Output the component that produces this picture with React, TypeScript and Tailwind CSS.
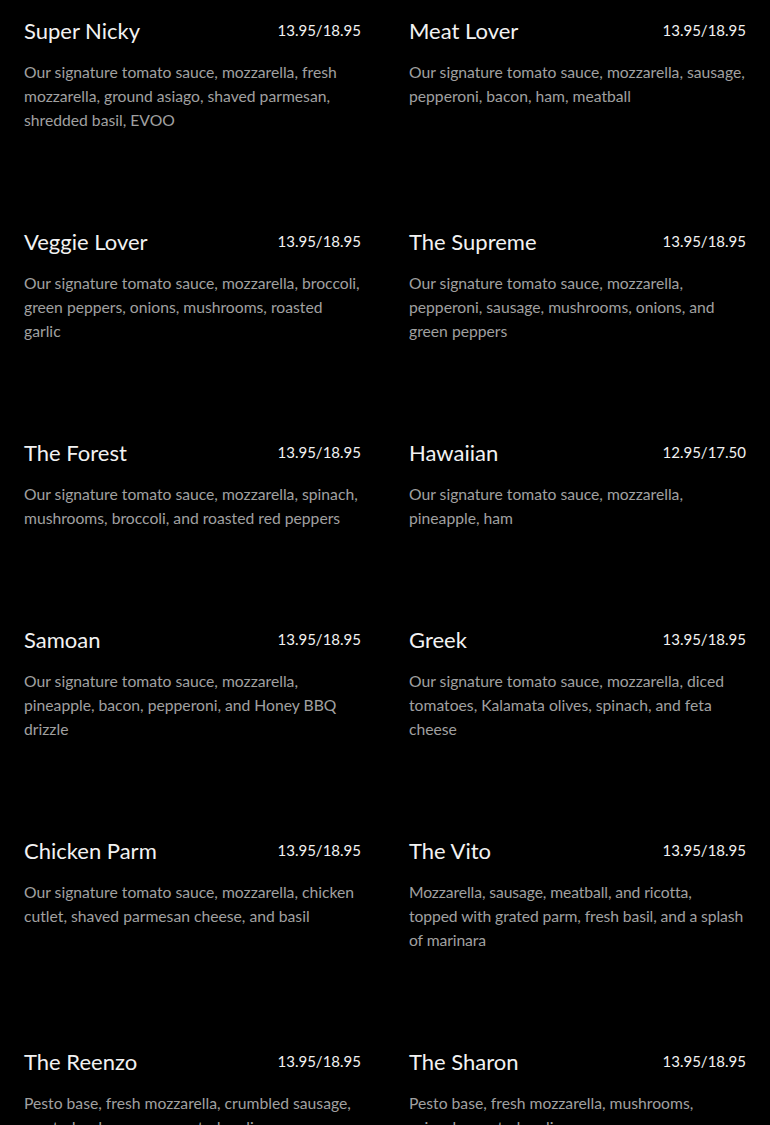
const items = [
  {
    name: "Super Nicky",
    price: "13.95/18.95",
    desc: ["Our signature tomato sauce, mozzarella, fresh mozzarella, ground asiago, shaved parmesan, shredded basil, EVOO"],
  },
  {
    name: "Meat Lover",
    price: "13.95/18.95",
    desc: ["Our signature tomato sauce, mozzarella, sausage, pepperoni, bacon, ham, meatball"],
  },
  {
    name: "Veggie Lover",
    price: "13.95/18.95",
    desc: ["Our signature tomato sauce, mozzarella, broccoli, green peppers, onions, mushrooms, roasted garlic"],
  },
  {
    name: "The Supreme",
    price: "13.95/18.95",
    desc: ["Our signature tomato sauce, mozzarella, pepperoni, sausage, mushrooms, onions, and green peppers"],
  },
  {
    name: "The Forest",
    price: "13.95/18.95",
    desc: ["Our signature tomato sauce, mozzarella, spinach, mushrooms, broccoli, and roasted red peppers"],
  },
  {
    name: "Hawaiian",
    price: "12.95/17.50",
    desc: ["Our signature tomato sauce, mozzarella, pineapple, ham"],
  },
  {
    name: "Samoan",
    price: "13.95/18.95",
    desc: ["Our signature tomato sauce, mozzarella, pineapple, bacon, pepperoni, and Honey BBQ drizzle"],
  },
  {
    name: "Greek",
    price: "13.95/18.95",
    desc: ["Our signature tomato sauce, mozzarella, diced tomatoes, Kalamata olives, spinach, and feta cheese"],
  },
  {
    name: "Chicken Parm",
    price: "13.95/18.95",
    desc: ["Our signature tomato sauce, mozzarella, chicken cutlet, shaved parmesan cheese, and basil"],
  },
  {
    name: "The Vito",
    price: "13.95/18.95",
    // keep the break where the menu has it
    desc: ["Mozzarella, sausage, meatball, and ricotta,", "topped with grated parm, fresh basil, and a splash of marinara"],
    tight: true,
  },
  {
    name: "The Reenzo",
    price: "13.95/18.95",
    desc: ["Pesto base, fresh mozzarella, crumbled sausage, roasted red peppers, roasted garlic"],
  },
  {
    name: "The Sharon",
    price: "13.95/18.95",
    desc: ["Pesto base, fresh mozzarella, mushrooms, spinach, roasted garlic"],
  },
];

type Item = { name: string; price: string; desc: string[]; tight?: boolean };

const MenuItem = ({ name, price, desc, tight }: Item) => {
  return (
    <div>
      <div className="flex items-start justify-between">
        <h3 className="text-[22px] leading-[26px] text-[#f2f2f2]">{name}</h3>
        <span className="pt-[1px] text-[15px] leading-[22px] text-[#f2f2f2]">{price}</span>
      </div>
      <p
        className={
          tight
            ? "mt-4 text-[15.7px] leading-6 tracking-[-0.1px] text-[#a0a0a0]"
            : "mt-4 text-[15.7px] leading-6 text-[#a0a0a0]"
        }
      >
        {desc.map((line, i) => (
          <span key={i}>
            {i > 0 && <br />}
            {line}
          </span>
        ))}
      </p>
    </div>
  );
};

export default function App() {
  return (
    <div className="min-h-screen bg-black font-['Lato',sans-serif] antialiased">
      <div className="grid grid-cols-2 gap-x-12 gap-y-[97px] px-6 pt-[18px] pb-24">
        {items.map((item) => (
          <MenuItem key={item.name} {...item} />
        ))}
      </div>
    </div>
  );
}
